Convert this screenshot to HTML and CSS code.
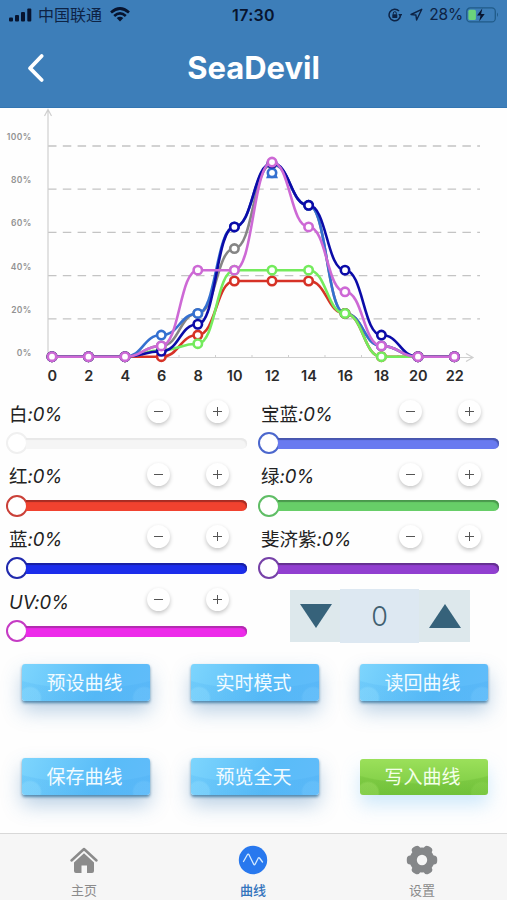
FILE: index.html
```html
<!DOCTYPE html>
<html lang="zh-CN">
<head>
<meta charset="utf-8">
<title>SeaDevil</title>
<link rel="stylesheet" href="styles.css">
</head>
<body>
<header class="header">
  <div class="status">
    <div class="status-left">
      <svg width="23" height="16" viewBox="0 0 23 16"><g fill="#07142f"><rect x="0" y="10.500" width="4" height="4" rx="1"/><rect x="6" y="8" width="4" height="6.500" rx="1"/><rect x="12" y="5" width="4" height="9.500" rx="1"/><rect x="18.300" y="1.500" width="4" height="13" rx="1"/></g></svg>
      <span class="carrier">中国联通</span>
      <svg width="20" height="15" viewBox="0 0 20 15"><g fill="none" stroke="#07142f" stroke-width="2.700"><path d="M1 5.400Q10-2.400 19 5.400"/><path d="M4.200 8.900Q10 3.900 15.800 8.900"/></g><path d="M6.700 11.100Q10 8.300 13.300 11.100L10 14.500Z" fill="#07142f"/></svg>
    </div>
    <div class="clock">17:30</div>
    <div class="status-right">
      <svg width="14" height="14" viewBox="0 0 14 14"><path d="M12.500 7A5.700 5.700 0 1 1 11 3.100" fill="none" stroke="#0d2345" stroke-width="1.500"/><path d="M10.300 6.100h4l-2 3z" fill="#0d2345"/><rect x="4.300" y="6.200" width="5" height="3.700" rx=".5" fill="#0d2345"/><path d="M5.300 6.500V5.200a1.500 1.500 0 0 1 3 0v1.300" fill="none" stroke="#0d2345"/></svg>
      <svg class="arrow" width="13" height="13" viewBox="0 0 13 13"><path d="M11.800 1.300L1 6.500l4.900.5.700 5z" fill="none" stroke="#0d2345" stroke-width="1.400" stroke-linejoin="round"/></svg>
      <span class="percent">28%</span>
      <svg class="battery" width="33" height="16" viewBox="0 0 33 16"><rect x=".7" y=".9" width="28.600" height="14" rx="3.500" fill="none" stroke="#205b88" stroke-width="1.300"/><path d="M31 5.600q2 2.200 0 4.400z" fill="#205b88"/><rect x="2.400" y="2.700" width="7.500" height="10.400" rx="1.500" fill="#6bd37b"/><path d="M16.300 1.500L11 8.600h3.500l-1.200 5.600 5.400-7.300h-3.600z" fill="#07142f"/></svg>
    </div>
  </div>
  <div class="nav">
    <svg class="back" width="20" height="30" viewBox="0 0 20 30"><path d="M15.700 3L4 15.200 15.700 27" fill="none" stroke="#fff" stroke-width="3.800" stroke-linecap="round" stroke-linejoin="round"/></svg>
    <h1>SeaDevil</h1>
  </div>
</header>

<svg class="chart" id="chart" width="507" height="282" viewBox="0 108 507 282"></svg>

<main class="channels">
  <section class="channel white"><div class="row"><span class="name">白<em>:0%</em></span><button class="round minus"></button><button class="round plus"></button></div><div class="slider"><i class="thumb"></i><i class="track"></i></div></section>
  <section class="channel royal"><div class="row"><span class="name">宝蓝<em>:0%</em></span><button class="round minus"></button><button class="round plus"></button></div><div class="slider"><i class="thumb"></i><i class="track"></i></div></section>
  <section class="channel red"><div class="row"><span class="name">红<em>:0%</em></span><button class="round minus"></button><button class="round plus"></button></div><div class="slider"><i class="thumb"></i><i class="track"></i></div></section>
  <section class="channel green"><div class="row"><span class="name">绿<em>:0%</em></span><button class="round minus"></button><button class="round plus"></button></div><div class="slider"><i class="thumb"></i><i class="track"></i></div></section>
  <section class="channel blue"><div class="row"><span class="name">蓝<em>:0%</em></span><button class="round minus"></button><button class="round plus"></button></div><div class="slider"><i class="thumb"></i><i class="track"></i></div></section>
  <section class="channel purple"><div class="row"><span class="name">斐济紫<em>:0%</em></span><button class="round minus"></button><button class="round plus"></button></div><div class="slider"><i class="thumb"></i><i class="track"></i></div></section>
  <section class="channel uv"><div class="row"><span class="name"><em>UV:0%</em></span><button class="round minus"></button><button class="round plus"></button></div><div class="slider"><i class="thumb"></i><i class="track"></i></div></section>
  <div class="stepper">
    <button class="step"><svg width="32" height="24" viewBox="0 0 32 24"><path d="M0 0h32L16 24z" fill="#36627a"/></svg></button>
    <span class="value">0</span>
    <button class="step up"><svg width="32" height="24" viewBox="0 0 32 24"><path d="M0 24h32L16 0z" fill="#36627a"/></svg></button>
  </div>
</main>

<div class="actions">
  <button class="action">预设曲线</button>
  <button class="action">实时模式</button>
  <button class="action">读回曲线</button>
  <button class="action">保存曲线</button>
  <button class="action">预览全天</button>
  <button class="action write">写入曲线</button>
</div>

<footer class="tabs">
  <div class="tab">
    <svg width="30" height="30" viewBox="0 0 30 30"><path d="M2.500 15.500L15 4l12.500 11.500" fill="none" stroke="#8b8b8b" stroke-width="2.500" stroke-linecap="round" stroke-linejoin="round"/><path d="M5 17.500L15 8.300l10 9.200V26q0 2-2 2h-5v-7.500h-5.500V28H7q-2 0-2-2z" fill="#8b8b8b"/></svg>
    <span>主页</span>
  </div>
  <div class="tab active">
    <svg width="30" height="30" viewBox="0 0 30 30"><circle cx="15" cy="15" r="14.200" fill="#2878ee"/><path d="M5.500 16.500L9.500 9.500Q10.200 8.700 11 9.700L15.700 19.300Q16.400 20.400 17.100 19.200L20.300 13Q20.900 12.200 21.500 13L24.500 17" fill="none" stroke="#d5ebff" stroke-width="1.300" stroke-linecap="round" stroke-linejoin="round"/></svg>
    <span>曲线</span>
  </div>
  <div class="tab">
    <svg width="32" height="30" viewBox="-16 -15 32 30"><g fill="#858789"><circle r="12.400"/><rect x="-15.200" y="-4.500" width="30.400" height="9" rx="3.500"/><rect x="-15.200" y="-4.500" width="30.400" height="9" rx="3.500" transform="rotate(60)"/><rect x="-15.200" y="-4.500" width="30.400" height="9" rx="3.500" transform="rotate(120)"/></g><circle r="5.200" fill="#f6f6f6"/></svg>
    <span>设置</span>
  </div>
</footer>
<script src="chart.js"></script>
</body>
</html>
```
FILE: styles.css
```css
* { box-sizing: border-box; }
body {
  margin: 0;
  width: 507px;
  height: 900px;
  overflow: hidden;
  display: flex;
  flex-direction: column;
  background: #fefefe;
  font-family: Inter, "Noto Sans CJK SC", sans-serif;
  color: #222;
}
button { border: 0; padding: 0; font: inherit; }
svg { display: block; flex: none; }

.header { height: 108px; background: #3d7eb9; border-bottom: 1px solid #3476b2; flex: none; }
.status {
  height: 29px;
  display: grid;
  grid-template-columns: 1fr auto 1fr;
  align-items: center;
  padding: 0 8px 0 9px;
  color: #0d2345;
}
.status-left, .status-right { display: flex; align-items: center; }
.status-right { justify-content: flex-end; }
.carrier { font-size: 16px; line-height: 20px; margin: 0 8px 0 6px; }
.clock { font-size: 16px; font-weight: 600; letter-spacing: .3px; color: #07142f; margin-left: -1px; }
.arrow { margin: 0 6px 0 8px; }
.percent { font-size: 15.500px; letter-spacing: -.2px; margin-right: 3px; }
.nav { height: 78px; display: grid; grid-template-columns: 60px 1fr 60px; align-items: center; }
.back { margin-left: 26px; }
h1 { margin: 0; font-size: 31px; line-height: 38px; font-weight: 700; text-align: center; color: #fff; }

.chart { flex: none; }
.tick { font-size: 8.500px; font-weight: 600; fill: #929292; text-anchor: end; letter-spacing: .4px; }
.hour { font-size: 14.500px; font-weight: 600; fill: #2b2b2b; text-anchor: middle; }

.channels {
  display: grid;
  grid-template-columns: 241px 241px;
  grid-auto-rows: 62.7px;
  column-gap: 11px;
  padding-left: 6px;
  flex: none;
}
.row { display: flex; height: 42px; align-items: center; padding: 5px 18px 0 3px; }
.name { flex: 1; font-size: 18.500px; line-height: 26px; white-space: nowrap; }
.name em { font-size: 18.500px; letter-spacing: -.1px; }
.round {
  width: 23px;
  height: 23px;
  margin: -4px 0 0 36.500px;
  border-radius: 50%;
  background:
    linear-gradient(#555, #555) center / 9px 1.300px no-repeat,
    #fff;
  box-shadow: 0 2px 4px rgba(0, 0, 0, .23);
}
.plus {
  background:
    linear-gradient(#555, #555) center / 9px 1.300px no-repeat,
    linear-gradient(#555, #555) center / 1.300px 9px no-repeat,
    #fff;
}
.slider { display: flex; align-items: center; height: 22px; }
.thumb { width: 22px; height: 22px; border: 2px solid var(--edge); border-radius: 50%; background: #fff; flex: none; }
.track {
  flex: 1;
  height: 11px;
  margin-left: -2px;
  border-radius: 0 6px 6px 0;
  background: var(--color);
  box-shadow: inset -1px 2px 1px var(--shade);
}
.white { --color: #f5f5f5; --edge: #f0f0f0; --shade: #e8e8e8; }
.royal { --color: #697af0; --edge: #4b67cd; --shade: #4755ad; }
.red { --color: #f1422f; --edge: #ca4038; --shade: #a72d24; }
.green { --color: #67ce68; --edge: #5fbd65; --shade: #4a984d; }
.blue { --color: #1c2deb; --edge: #2029ad; --shade: #1820a4; }
.purple { --color: #913fd0; --edge: #7641a8; --shade: #63308f; }
.uv { --color: #ed2bea; --edge: #c53bc4; --shade: #b12bae; }

.stepper { display: flex; align-items: center; height: 54px; margin: 10.5px 0 0 32px; width: 180px; }
.step { width: 50px; height: 52px; background: #dde8ec; display: flex; align-items: center; justify-content: center; padding-left: 2px; }
.step.up { width: 51px; padding-left: 0; }
.value { width: 79px; height: 54px; background: #dde8f2; color: #416070; font-size: 27px; font-weight: 300; line-height: 56px; text-align: center; }

.actions {
  display: grid;
  grid-template-columns: repeat(3, 128px);
  grid-auto-rows: 37px;
  gap: 57px 41px;
  padding: 23.200px 0 0 22px;
  flex: 1;
}
.action {
  border-radius: 3px;
  color: #f2fbff;
  font-size: 19px;
  line-height: 35px;
  padding: 2px 3px 0 0;
  background:
    radial-gradient(circle at 8px 34px, rgba(150, 224, 255, .35) 0 10px, transparent 12px),
    radial-gradient(circle at 122px 34px, rgba(130, 208, 255, .25) 0 10px, transparent 12px),
    radial-gradient(ellipse 90px 25px at 64px 0, transparent 96%, rgba(55, 160, 235, .15) 100%),
    linear-gradient(115deg, #7dd5fd, #59bcf8 60%, #61bcfa);
  box-shadow: 0 2px 3px rgba(40, 105, 150, .75), 0 10px 20px rgba(55, 120, 180, .35);
}
.action.write {
  height: 36px;
  margin-top: 1px;
  padding-top: 1px;
  color: #f4ffe9;
  background:
    radial-gradient(circle at 8px 34px, rgba(170, 230, 110, .35) 0 10px, transparent 12px),
    radial-gradient(circle at 122px 34px, rgba(150, 220, 90, .25) 0 10px, transparent 12px),
    radial-gradient(ellipse 90px 25px at 64px 0, transparent 96%, rgba(80, 165, 30, .2) 100%),
    linear-gradient(#9be05a, #78c840);
  box-shadow: 0 10px 18px rgba(120, 195, 245, .35);
}

.tabs { height: 67px; flex: none; display: grid; grid-template-columns: repeat(3, 1fr); background: #f6f6f6; border-top: 1.500px solid #d8d8d8; }
.tab { display: flex; flex-direction: column; align-items: center; padding: 11px 1px 0 0; font-size: 13px; line-height: 18px; color: #8b8b8b; }
.tab span { margin-top: 6px; }
.active { color: #3273bc; font-weight: 500; }
```
FILE: chart.js
```js
const hours = [52, 88.5, 125, 161.3, 197.8, 234.4, 272, 308.6, 345, 381.4, 418, 454.4];
const yOf = v => 356.7 - v * 2.163;
const series = [
  ["#858585", [0, 0, 0, 5, 20, 50, 89, 70, 20, 5, 0, 0]],
  ["#3470d0", [0, 0, 0, 10, 20, 60, 89, 70, 20, 5, 0, 0], { 6: 85 }],
  ["#d63226", [0, 0, 0, 0, 10, 35, 35, 35, 20, 0, 0, 0]],
  ["#74eb5d", [0, 0, 0, 3, 6, 40, 40, 40, 20, 0, 0, 0]],
  ["#0b0ba8", [0, 0, 0, 2.500, 15, 60, 89.500, 70, 40, 10, 0, 0]],
  ["#cd69d5", [0, 0, 0, 5, 40, 40, 90, 60, 30, 5, 0, 0]]
];
let out = "";
for (let i = 0; i < 6; i++) {
  const label = 137.500 + i * 43.100;
  out += `<text class="tick" x="31.800" y="${label + 2.700}">${100 - i * 20}%</text>`;
  if (i < 5) out += `<path d="M48 ${146 + i * 43.200}H480" stroke="#c4c4c4" stroke-width="1.300" stroke-dasharray="8.500 6.300"/>`;
}
out += '<path d="M48 357.500V110M44.500 116L48 109.500l3.500 6.500M48 357.500H473M466 353.500l7 4-7 4" fill="none" stroke="#cfcfcf" stroke-width="1.200"/>';
for (let i = 0; i < 11; i++) {
  out += `<path d="M${69.500 + i * 36.500} 355v3" stroke="#cfcfcf"/>`;
}
hours.forEach((x, i) => {
  out += `<text class="hour" x="${x + .3}" y="380.500">${i * 2}</text>`;
});
for (const [color, values, moved = {}] of series) {
  let d = `M${hours[0]} ${yOf(values[0])}`;
  let dots = "";
  values.forEach((v, i) => {
    if (i) {
      const mid = (hours[i - 1] + hours[i]) / 2;
      d += `C${mid} ${yOf(values[i - 1])} ${mid} ${yOf(v)} ${hours[i]} ${yOf(v)}`;
    }
    if (i in moved) dots += `<path d="M${hours[i]} ${yOf(v)}l-6 14h12z" fill="${color}" stroke="none"/>`;
    dots += `<circle cx="${hours[i]}" cy="${yOf(i in moved ? moved[i] : v)}" r="4.200" fill="#fff"/>`;
  });
  out += `<g fill="none" stroke="${color}" stroke-width="2.600"><path d="${d}"/>${dots}</g>`;
}
document.getElementById("chart").innerHTML = out;
```
